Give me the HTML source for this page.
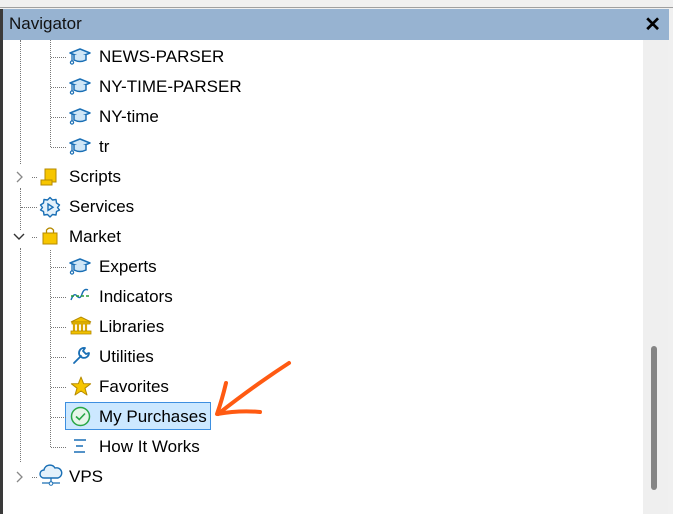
<!DOCTYPE html>
<html><head><meta charset="utf-8"><style>
*{margin:0;padding:0;box-sizing:border-box}
body{width:673px;height:514px;background:#f0f0f0;position:relative;overflow:hidden;font-family:"Segoe UI","Liberation Sans",sans-serif;}
.top{position:absolute;left:0;top:0;width:673px;height:8px;background:#f0f0f0;border-bottom:1px solid #a0a0a0}
.hdr{position:absolute;left:3px;top:9px;width:666px;height:31px;background:#97b3d1;font-size:17px;color:#111;padding:5px 0 0 6px}
.x{position:absolute;right:8px;top:3px;font-size:20px;font-weight:bold;color:#000}
.lb{position:absolute;left:0;top:9px;width:3px;height:505px;background:#3a3a3a}
.content{position:absolute;left:3px;top:40px;width:640px;height:474px;background:#fff}
.sb{position:absolute;left:643px;top:40px;width:25px;height:474px;background:#efefef}
.thumb{position:absolute;left:651px;top:346px;width:6px;height:144px;background:#858585;border-radius:3px}
.row{position:absolute;font-size:17px;color:#000;line-height:20px}
.v{position:absolute;border-left:1px dotted #777;width:0}
.h{position:absolute;border-top:1px dotted #777;height:0}
.ic{position:absolute}
.sel{position:absolute;left:65px;top:402px;width:146px;height:28px;background:#cce8ff;border:1px solid #3d8fe0}
</style></head><body>
<div class="top"></div>
<div class="lb"></div>
<div class="hdr">Navigator<span class="x">✕</span></div>
<div class="content"></div>
<div class="sb"></div><div class="thumb"></div>
<div class="sel"></div>
<div class="v" style="left:20px;top:40px;height:124px"></div>
<div class="v" style="left:20px;top:188px;height:42px"></div>
<div class="v" style="left:20px;top:248px;height:214px"></div>
<div class="v" style="left:50px;top:40px;height:107px"></div>
<div class="v" style="left:50px;top:250px;height:197px"></div>
<div class="h" style="left:51px;top:57px;width:15px"></div>
<div class="h" style="left:51px;top:87px;width:15px"></div>
<div class="h" style="left:51px;top:117px;width:15px"></div>
<div class="h" style="left:51px;top:147px;width:15px"></div>
<div class="h" style="left:32px;top:177px;width:5px"></div>
<div class="h" style="left:21px;top:207px;width:16px"></div>
<div class="h" style="left:32px;top:237px;width:5px"></div>
<div class="h" style="left:51px;top:267px;width:15px"></div>
<div class="h" style="left:51px;top:297px;width:15px"></div>
<div class="h" style="left:51px;top:327px;width:15px"></div>
<div class="h" style="left:51px;top:357px;width:15px"></div>
<div class="h" style="left:51px;top:387px;width:15px"></div>
<div class="h" style="left:51px;top:417px;width:15px"></div>
<div class="h" style="left:51px;top:447px;width:15px"></div>
<div class="h" style="left:32px;top:477px;width:5px"></div>
<svg class="ic" style="left:14px;top:170px" width="10" height="14"><path d="M3 2 L8 7 L3 12" fill="none" stroke="#888" stroke-width="1.3"/></svg>
<svg class="ic" style="left:12px;top:232px" width="14" height="10"><path d="M2 2 L7 7 L12 2" fill="none" stroke="#333" stroke-width="1.4"/></svg>
<svg class="ic" style="left:14px;top:470px" width="10" height="14"><path d="M3 2 L8 7 L3 12" fill="none" stroke="#888" stroke-width="1.3"/></svg>
<svg width="0" height="0" style="position:absolute"><defs><g id="cap"><path d="M1 6 L11 2 L21 6 L11 10 Z" fill="#cfe6f7" stroke="#1a6fb5" stroke-width="1.5" stroke-linejoin="round"/><path d="M5 8 V13 Q11 16 17 13 V8" fill="#cfe6f7" stroke="#1a6fb5" stroke-width="1.5"/><path d="M3 7 V14" stroke="#1a6fb5" stroke-width="1.3"/><circle cx="3" cy="15.5" r="1.6" fill="#fff" stroke="#1a6fb5" stroke-width="1.2"/></g></defs></svg>
<svg class="ic" style="left:69px;top:47px" width="22" height="19"><use href="#cap"/></svg>
<svg class="ic" style="left:69px;top:77px" width="22" height="19"><use href="#cap"/></svg>
<svg class="ic" style="left:69px;top:107px" width="22" height="19"><use href="#cap"/></svg>
<svg class="ic" style="left:69px;top:137px" width="22" height="19"><use href="#cap"/></svg>
<svg class="ic" style="left:69px;top:257px" width="22" height="19"><use href="#cap"/></svg>
<svg class="ic" style="left:40px;top:167px" width="20" height="20"><path d="M5 2 H16 V15 H5 Z" fill="#f7c600" stroke="#b58a00"/><path d="M1 13 H12 V18 H1 Z" fill="#f7c600" stroke="#b58a00"/></svg>
<svg class="ic" style="left:39px;top:196px" width="22" height="22"><path d="M11 1.5 L13.5 4 L17 3.5 L17.5 7 L20.5 9 L18.5 11.5 L20.5 14 L17.5 15.5 L17 19 L13.5 18.5 L11 21 L8.5 18.5 L5 19 L4.5 15.5 L1.5 14 L3.5 11.5 L1.5 9 L4.5 7 L5 3.5 L8.5 4 Z" fill="#e4f1fb" stroke="#1a6fb5" stroke-width="1.4" stroke-linejoin="round"/><path d="M9 8 L14 11.2 L9 14.5 Z" fill="none" stroke="#1a6fb5" stroke-width="1.4"/></svg>
<svg class="ic" style="left:41px;top:226px" width="20" height="20"><path d="M2 7 H16 V18 H2 Z" fill="#f7c600" stroke="#b58a00"/><path d="M5.5 7 V4 Q9 0 12.5 4 V7" fill="none" stroke="#b58a00" stroke-width="1.3"/></svg>
<svg class="ic" style="left:70px;top:288px" width="22" height="16"><path d="M1 12 Q4 4 7 8 T12 6 T18 2" fill="none" stroke="#1a6fb5" stroke-width="1.4"/><path d="M1 8 H21" stroke="#2a9d3a" stroke-width="1.4" stroke-dasharray="3 2"/></svg>
<svg class="ic" style="left:70px;top:316px" width="22" height="20"><path d="M1 6 L11 1 L21 6 Z" fill="#f2c200" stroke="#b58a00"/><rect x="2" y="6" width="18" height="2" fill="#f2c200" stroke="#b58a00" stroke-width=".8"/><path d="M4 8 V15 M8 8 V15 M12 8 V15 M16 8 V15" stroke="#d9a600" stroke-width="2.2"/><rect x="1" y="15" width="20" height="3" fill="#f2c200" stroke="#b58a00" stroke-width=".8"/></svg>
<svg class="ic" style="left:71px;top:346px" width="20" height="20"><path d="M3 17 L10 10 M14 2 A5 5 0 1 0 18 7 L15 8 L12 5 Z" fill="none" stroke="#1a6fb5" stroke-width="1.8" stroke-linecap="round" stroke-linejoin="round"/></svg>
<svg class="ic" style="left:70px;top:376px" width="22" height="21"><path d="M11 1 L13.6 7.6 L20.6 7.8 L15 12.2 L17 19 L11 15 L5 19 L7 12.2 L1.4 7.8 L8.4 7.6 Z" fill="#f7c600" stroke="#b58a00" stroke-linejoin="round"/></svg>
<svg class="ic" style="left:70px;top:406px" width="21" height="21"><circle cx="10.5" cy="10.5" r="9" fill="#e6f6e9" stroke="#28a745" stroke-width="1.5"/><path d="M6 10.5 L9.3 13.5 L15 7.5" fill="none" stroke="#28a745" stroke-width="1.6"/></svg>
<svg class="ic" style="left:72px;top:437px" width="16" height="20"><path d="M2 3 H14 M4 9 H11 M2 15 H13" stroke="#1a6fb5" stroke-width="1.6"/></svg>
<svg class="ic" style="left:38px;top:464px" width="26" height="24"><path d="M6 14 A4 4 0 0 1 6 6 A6 6 0 0 1 17 4 A5 5 0 0 1 20 14 Z" fill="#e4f1fb" stroke="#1a6fb5" stroke-width="1.4"/><path d="M13 14 V19 M4 19 H22" stroke="#1a6fb5" stroke-width="1.3"/><circle cx="13" cy="19.5" r="1.8" fill="#fff" stroke="#1a6fb5"/></svg>
<div class="row" style="left:99px;top:47px">NEWS-PARSER</div>
<div class="row" style="left:99px;top:77px">NY-TIME-PARSER</div>
<div class="row" style="left:99px;top:107px">NY-time</div>
<div class="row" style="left:99px;top:137px">tr</div>
<div class="row" style="left:69px;top:167px">Scripts</div>
<div class="row" style="left:69px;top:197px">Services</div>
<div class="row" style="left:69px;top:227px">Market</div>
<div class="row" style="left:99px;top:257px">Experts</div>
<div class="row" style="left:99px;top:287px">Indicators</div>
<div class="row" style="left:99px;top:317px">Libraries</div>
<div class="row" style="left:99px;top:347px">Utilities</div>
<div class="row" style="left:99px;top:377px">Favorites</div>
<div class="row" style="left:99px;top:407px">My Purchases</div>
<div class="row" style="left:99px;top:437px">How It Works</div>
<div class="row" style="left:69px;top:467px">VPS</div>
<svg class="ic" style="left:0;top:0" width="673" height="514"><path d="M289 363 Q255 385 218 414" fill="none" stroke="#ff5a12" stroke-width="4" stroke-linecap="round"/><path d="M226 383 Q222 400 217 414 Q240 410 260 412" fill="none" stroke="#ff5a12" stroke-width="4" stroke-linecap="round" stroke-linejoin="round"/></svg>
</body></html>
